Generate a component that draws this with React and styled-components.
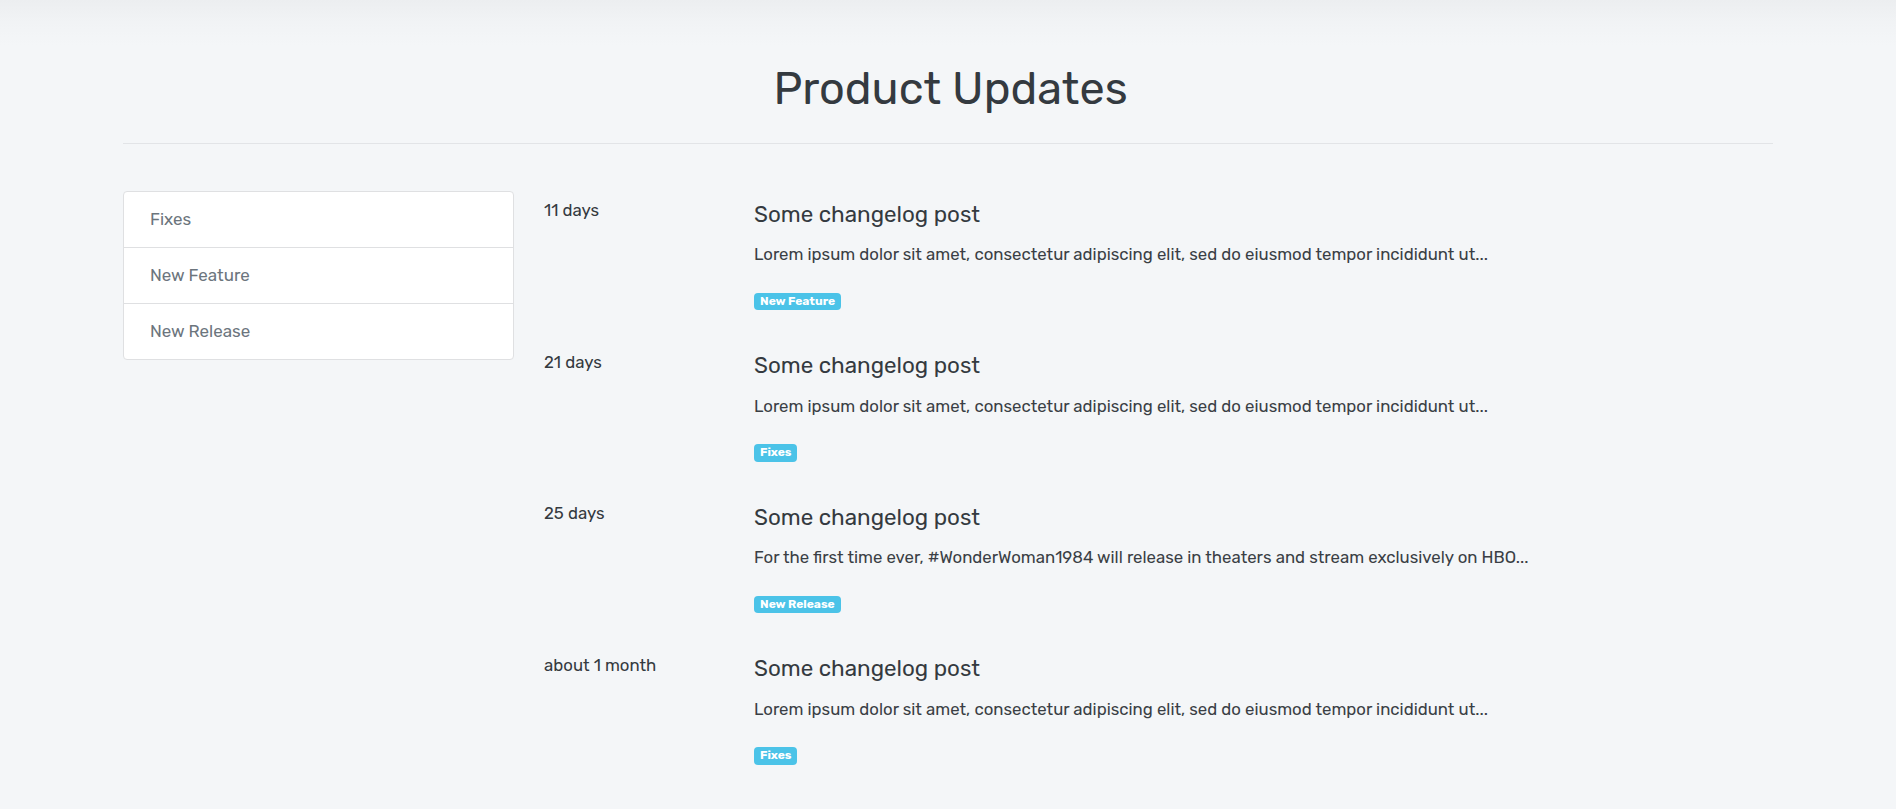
import React from 'react'
import styled, { createGlobalStyle } from 'styled-components'

const GlobalStyle = createGlobalStyle`
  * { box-sizing: border-box; }
  html, body { margin: 0; padding: 0; }
  body {
    font-family: Rubik, Inter, "Noto Sans", sans-serif;
    color: #343a40;
    background: #f4f6f8;
  }
`

const categories = ['Fixes', 'New Feature', 'New Release']

const posts = [
  {
    id: 1,
    when: '11 days',
    title: 'Some changelog post',
    text: 'Lorem ipsum dolor sit amet, consectetur adipiscing elit, sed do eiusmod tempor incididunt ut...',
    tag: 'New Feature'
  },
  {
    id: 2,
    when: '21 days',
    title: 'Some changelog post',
    text: 'Lorem ipsum dolor sit amet, consectetur adipiscing elit, sed do eiusmod tempor incididunt ut...',
    tag: 'Fixes'
  },
  {
    id: 3,
    when: '25 days',
    title: 'Some changelog post',
    text: 'For the first time ever, #WonderWoman1984 will release in theaters and stream exclusively on HBO...',
    tag: 'New Release'
  },
  {
    id: 4,
    when: 'about 1 month',
    title: 'Some changelog post',
    text: 'Lorem ipsum dolor sit amet, consectetur adipiscing elit, sed do eiusmod tempor incididunt ut...',
    tag: 'Fixes'
  }
]

const App = () => (
  <Page>
    <GlobalStyle />
    <Container>
      <Header>
        <Title>Product Updates</Title>
      </Header>
      <Row>
        <Sidebar>
          <ListGroup>
            {categories.map(name => (
              <ListItem key={name}>{name}</ListItem>
            ))}
          </ListGroup>
        </Sidebar>
        <Feed>
          {posts.map(post => (
            <Post key={post.id}>
              <When>{post.when}</When>
              <PostBody>
                <PostTitle>{post.title}</PostTitle>
                <Excerpt>{post.text}</Excerpt>
                <Badge>{post.tag}</Badge>
              </PostBody>
            </Post>
          ))}
        </Feed>
      </Row>
    </Container>
  </Page>
)

const Page = styled.div`
  min-height: 100vh;
  background: linear-gradient(to bottom, #eceef0 0, #f1f3f5 22px, #f4f6f8 46px);
`
const Container = styled.div`
  max-width: 1680px;
  margin: 0 auto;
  padding: 0 15px;
`
const Header = styled.header`
  padding: 62px 0 27px 5px;
  border-bottom: 1px solid #e2e4e7;
  text-align: center;
`
const Title = styled.h1`
  margin: 0;
  font-size: 45px;
  line-height: 54px;
  font-weight: 400;
  color: #343a40;
`
const Row = styled.div`
  display: grid;
  grid-template-columns: 391px 1fr;
  column-gap: 30px;
  margin-top: 47px;
`
const Sidebar = styled.aside``
const ListGroup = styled.ul`
  list-style: none;
  margin: 0;
  padding: 0;
  background: #fff;
  border: 1px solid #dfe0e2;
  border-radius: 4px;
`
const ListItem = styled.li`
  padding: 14px 26px;
  font-size: 17px;
  line-height: 27px;
  color: #6c757d;
  & + & {
    border-top: 1px solid #dfe0e2;
  }
`
const Feed = styled.section`
  padding-top: 7px;
`
const Post = styled.article`
  display: grid;
  grid-template-columns: 210px 1fr;
  height: 151.6px;
`
const When = styled.div`
  font-size: 16.8px;
  line-height: 25px;
  color: #343a40;
`
const PostBody = styled.div`
  display: flex;
  flex-direction: column;
  align-items: flex-start;
  padding-top: 2.5px;
`
const PostTitle = styled.h2`
  margin: 0 0 14.5px;
  font-size: 22.4px;
  line-height: 27px;
  font-weight: 400;
  color: #343a40;
`
const Excerpt = styled.p`
  margin: 0 0 25px;
  font-size: 16.8px;
  line-height: 25.5px;
  color: #3a3f45;
`
const Badge = styled.span`
  display: inline-block;
  padding: 2px 6px;
  font-size: 12px;
  line-height: 13.6px;
  font-weight: 700;
  color: #fff;
  background: #4bc3e8;
  border-radius: 4px;
`

export default App
